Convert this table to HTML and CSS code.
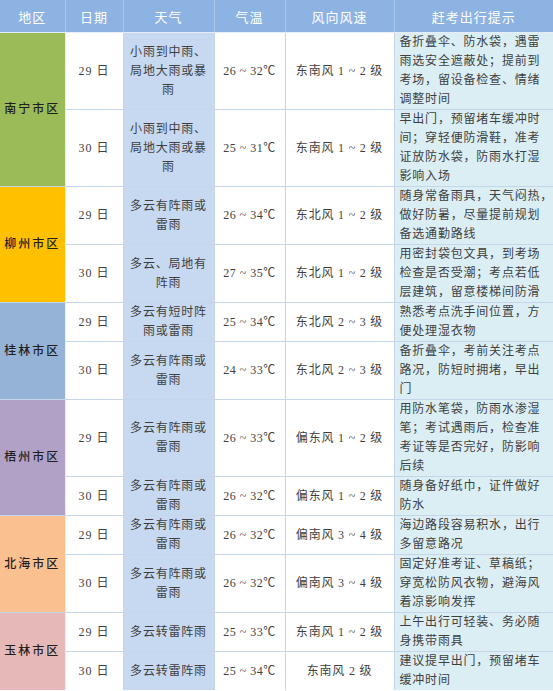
FILE: index.html
```html
<!DOCTYPE html>
<html lang="zh-CN">
<head>
<meta charset="utf-8">
<title>赶考出行提示</title>
<link rel="stylesheet" href="styles.css">
</head>
<body>
<table class="wx">
  <colgroup>
    <col class="c-region"><col class="c-date"><col class="c-weather"><col class="c-temp"><col class="c-wind"><col class="c-tip">
  </colgroup>
  <thead>
    <tr><th>地区</th><th>日期</th><th>天气</th><th>气温</th><th>风向风速</th><th>赶考出行提示</th></tr>
  </thead>
  <tbody>
    <tr>
      <td class="region nanning" rowspan="2">南宁市区</td>
      <td class="date">29 日</td>
      <td class="weather">小雨到中雨、<br>局地大雨或暴<br>雨</td>
      <td class="temp">26 ~ 32℃</td>
      <td class="wind">东南风 1 ~ 2 级</td>
      <td class="tip">备折叠伞、防水袋，遇雷<br>雨选安全遮蔽处；提前到<br>考场，留设备检查、情绪<br>调整时间</td>
    </tr>
    <tr>
      <td class="date">30 日</td>
      <td class="weather">小雨到中雨、<br>局地大雨或暴<br>雨</td>
      <td class="temp">25 ~ 31℃</td>
      <td class="wind">东南风 1 ~ 2 级</td>
      <td class="tip">早出门，预留堵车缓冲时<br>间；穿轻便防滑鞋，准考<br>证放防水袋，防雨水打湿<br>影响入场</td>
    </tr>
    <tr>
      <td class="region liuzhou" rowspan="2">柳州市区</td>
      <td class="date">29 日</td>
      <td class="weather">多云有阵雨或<br>雷雨</td>
      <td class="temp">26 ~ 34℃</td>
      <td class="wind">东北风 1 ~ 2 级</td>
      <td class="tip">随身常备雨具，天气闷热，<br>做好防暑，尽量提前规划<br>备选通勤路线</td>
    </tr>
    <tr>
      <td class="date">30 日</td>
      <td class="weather">多云、局地有<br>阵雨</td>
      <td class="temp">27 ~ 35℃</td>
      <td class="wind">东北风 1 ~ 2 级</td>
      <td class="tip">用密封袋包文具，到考场<br>检查是否受潮；考点若低<br>层建筑，留意楼梯间防滑</td>
    </tr>
    <tr>
      <td class="region guilin" rowspan="2">桂林市区</td>
      <td class="date">29 日</td>
      <td class="weather">多云有短时阵<br>雨或雷雨</td>
      <td class="temp">25 ~ 34℃</td>
      <td class="wind">东北风 2 ~ 3 级</td>
      <td class="tip">熟悉考点洗手间位置，方<br>便处理湿衣物</td>
    </tr>
    <tr>
      <td class="date">30 日</td>
      <td class="weather">多云有阵雨或<br>雷雨</td>
      <td class="temp">24 ~ 33℃</td>
      <td class="wind">东北风 2 ~ 3 级</td>
      <td class="tip">备折叠伞，考前关注考点<br>路况，防短时拥堵，早出<br>门</td>
    </tr>
    <tr>
      <td class="region wuzhou" rowspan="2">梧州市区</td>
      <td class="date">29 日</td>
      <td class="weather">多云有阵雨或<br>雷雨</td>
      <td class="temp">26 ~ 33℃</td>
      <td class="wind">偏东风 1 ~ 2 级</td>
      <td class="tip">用防水笔袋，防雨水渗湿<br>笔；考试遇雨后，检查准<br>考证等是否完好，防影响<br>后续</td>
    </tr>
    <tr>
      <td class="date">30 日</td>
      <td class="weather">多云有阵雨或<br>雷雨</td>
      <td class="temp">26 ~ 32℃</td>
      <td class="wind">偏东风 1 ~ 2 级</td>
      <td class="tip">随身备好纸巾，证件做好<br>防水</td>
    </tr>
    <tr>
      <td class="region beihai" rowspan="2">北海市区</td>
      <td class="date">29 日</td>
      <td class="weather">多云有阵雨或<br>雷雨</td>
      <td class="temp">26 ~ 32℃</td>
      <td class="wind">偏南风 3 ~ 4 级</td>
      <td class="tip">海边路段容易积水，出行<br>多留意路况</td>
    </tr>
    <tr>
      <td class="date">30 日</td>
      <td class="weather">多云有阵雨或<br>雷雨</td>
      <td class="temp">26 ~ 32℃</td>
      <td class="wind">偏南风 3 ~ 4 级</td>
      <td class="tip">固定好准考证、草稿纸；<br>穿宽松防风衣物，避海风<br>着凉影响发挥</td>
    </tr>
    <tr>
      <td class="region yulin" rowspan="2">玉林市区</td>
      <td class="date">29 日</td>
      <td class="weather">多云转雷阵雨</td>
      <td class="temp">25 ~ 33℃</td>
      <td class="wind">东南风 1 ~ 2 级</td>
      <td class="tip">上午出行可轻装、务必随<br>身携带雨具</td>
    </tr>
    <tr>
      <td class="date">30 日</td>
      <td class="weather">多云转雷阵雨</td>
      <td class="temp">25 ~ 34℃</td>
      <td class="wind">东南风 2 级</td>
      <td class="tip">建议提早出门，预留堵车<br>缓冲时间</td>
    </tr>
  </tbody>
</table>
</body>
</html>
```
FILE: styles.css
```css
html, body {
  margin: 0;
  padding: 0;
  background: #ffffff;
}

.wx {
  width: 553px;
  border-collapse: collapse;
  table-layout: fixed;
  font-family: "Liberation Serif", "Noto Sans CJK SC", serif;
  font-size: 12px;
  color: #3f3f3f;
}

.c-region { width: 65px; }
.c-date { width: 58px; }
.c-weather { width: 91px; }
.c-temp { width: 71px; }
.c-wind { width: 109px; }
.c-tip { width: 159px; }

.wx th {
  background: #8db3e2;
  color: #ffffff;
  font-family: "Noto Sans CJK SC", sans-serif;
  font-weight: normal;
  font-size: 13px;
  letter-spacing: 1px;
  height: 32px;
  padding: 0;
  border: 1px solid #a9c6ea;
  border-top: none;
  border-bottom: 1px solid #e4edf8;
  text-align: center;
  vertical-align: middle;
}

.wx th:first-child { border-left: none; }
.wx th:last-child { border-right: none; }

.wx td {
  border: 1px solid #c5d5ea;
  padding: 0;
  line-height: 19px;
  text-align: center;
  vertical-align: middle;
  letter-spacing: 0.8px;
  white-space: nowrap;
}

.wx td.region {
  border-left: none;
  border-right: 1px solid #e6eef8;
  color: #1f1f1f;
  letter-spacing: 2px;
  font-weight: 500;
}

.wx tr:last-child td,
.wx td.yulin { border-bottom: none; }

.wx td.weather { background: #c6d9f1; }

.wx td.tip {
  background: #dbeef4;
  text-align: left;
  padding: 0 2px 0 5px;
  border-right: none;
}

.wx td.date { letter-spacing: 1px; }
.wx td.temp { letter-spacing: 0.5px; }

.nanning { background: #9bbb59; }
.liuzhou { background: #ffc000; }
.guilin { background: #95b3d7; }
.wuzhou { background: #b2a1c7; }
.beihai { background: #fac090; }
.yulin { background: #e6b9b8; }
```
